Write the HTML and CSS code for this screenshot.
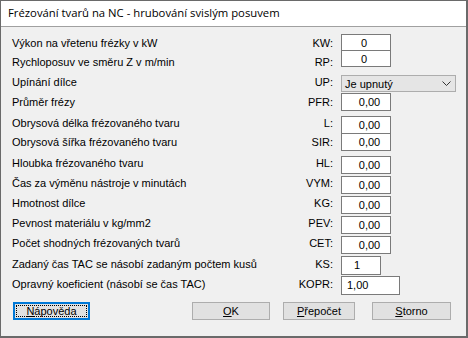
FILE: index.html
```html
<!DOCTYPE html>
<html lang="cs">
<head>
    <meta charset="UTF-8">
    <title>Frézování tvarů na NC</title>
    <link rel="stylesheet" href="styles.css">
</head>
<body>
    <div class="window">
        <div class="titlebar">Frézování tvarů na NC - hrubování svislým posuvem</div>
        <div class="content">
            <div class="form">
                <div class="row first">
                    <span class="label">Výkon na vřetenu frézky v kW</span>
                    <span class="code">KW:</span>
                    <span class="field int f-kw">0</span>
                </div>
                <div class="row">
                    <span class="label">Rychloposuv ve směru Z v m/min</span>
                    <span class="code">RP:</span>
                    <span class="field int f-rp">0</span>
                </div>
                <div class="row">
                    <span class="label">Upínání dílce</span>
                    <span class="code">UP:</span>
                    <span class="combo">Je upnutý
                        <svg class="chevron" width="9" height="5" viewBox="0 0 9 5"><path d="M0.5 0.5 L4.5 4.5 L8.5 0.5" fill="none" stroke="#333" stroke-width="1"/></svg>
                    </span>
                </div>
                <div class="row">
                    <span class="label">Průměr frézy</span>
                    <span class="code">PFR:</span>
                    <span class="field dec">0,00</span>
                </div>
                <div class="row">
                    <span class="label">Obrysová délka frézovaného tvaru</span>
                    <span class="code">L:</span>
                    <span class="field dec low">0,00</span>
                </div>
                <div class="row">
                    <span class="label">Obrysová šířka frézovaného tvaru</span>
                    <span class="code">SIR:</span>
                    <span class="field dec">0,00</span>
                </div>
                <div class="row">
                    <span class="label">Hloubka frézovaného tvaru</span>
                    <span class="code">HL:</span>
                    <span class="field dec low">0,00</span>
                </div>
                <div class="row">
                    <span class="label">Čas za výměnu nástroje v minutách</span>
                    <span class="code">VYM:</span>
                    <span class="field dec low">0,00</span>
                </div>
                <div class="row">
                    <span class="label">Hmotnost dílce</span>
                    <span class="code">KG:</span>
                    <span class="field dec low">0,00</span>
                </div>
                <div class="row">
                    <span class="label">Pevnost materiálu v kg/mm2</span>
                    <span class="code">PEV:</span>
                    <span class="field dec low">0,00</span>
                </div>
                <div class="row">
                    <span class="label">Počet shodných frézovaných tvarů</span>
                    <span class="code">CET:</span>
                    <span class="field dec low">0,00</span>
                </div>
                <div class="row">
                    <span class="label">Zadaný čas TAC se násobí zadaným počtem kusů</span>
                    <span class="code">KS:</span>
                    <span class="field f-ks low">1</span>
                </div>
                <div class="row">
                    <span class="label">Opravný koeficient (násobí se čas TAC)</span>
                    <span class="code">KOPR:</span>
                    <span class="field f-kopr low">1,00</span>
                </div>
            </div>
            <div class="buttons">
                <button class="btn default"><span class="focus"><u>N</u>ápověda</span></button>
                <button class="btn ok"><u>O</u>K</button>
                <button class="btn calc"><u>P</u>řepočet</button>
                <button class="btn cancel"><u>S</u>torno</button>
            </div>
        </div>
    </div>
</body>
</html>
```

FILE: styles.css
```css
body {
    margin: 0;
    background: #f0f0f0;
    font-family: "Liberation Sans", Arial, sans-serif;
    font-size: 11px;
    color: #000;
}
.window {
    width: 468px;
    height: 338px;
    box-sizing: border-box;
    border: 1px solid #6a6a6a;
    border-right-width: 2px;
    border-bottom-width: 2px;
    display: flex;
    flex-direction: column;
}
.titlebar {
    height: 25px;
    background: #fff;
    border-bottom: 1px solid #a0a0a0;
    padding-left: 7px;
    font-family: "Open Sans", "Noto Sans", sans-serif;
    font-size: 11.3px;
    line-height: 24px;
    white-space: nowrap;
}
.content {
    flex: 1;
    background: #f0f0f0;
    padding: 6px 0 0 11px;
}
.row {
    display: grid;
    grid-template-columns: 255px 60px 120px;
    column-gap: 7px;
    align-items: center;
    height: 20px;
}
.row.first {
    height: 19px;
}
.label {
    white-space: nowrap;
}
.code {
    text-align: right;
    padding-right: 1px;
}
.field {
    box-sizing: border-box;
    width: 50px;
    height: 18px;
    background: #fff;
    border: 1px solid #7a7a7a;
    line-height: 16px;
    text-align: center;
}
.field.low {
    margin-top: 4px;
}
.field.int {
    height: 17px;
    padding-right: 4px;
}
.field.f-rp {
    margin-top: -7px;
}
.field.dec {
    padding-left: 7px;
}
.field.f-ks {
    width: 40px;
    height: 19px;
    text-align: left;
    padding-left: 12px;
    line-height: 17px;
}
.field.f-kopr {
    width: 59px;
    height: 19px;
    text-align: left;
    padding-left: 5px;
    line-height: 17px;
}
.combo {
    box-sizing: border-box;
    width: 115px;
    height: 17px;
    margin-top: 3px;
    background: #e5e5e5;
    border: 1px solid #adadad;
    padding-left: 3px;
    display: flex;
    align-items: center;
    justify-content: space-between;
}
.chevron {
    margin-right: 4px;
}
.buttons {
    display: flex;
    margin-top: 10px;
    padding-left: 1px;
    padding-right: 15px;
}
.btn {
    height: 18px;
    box-sizing: border-box;
    background: #e1e1e1;
    border: 1px solid #adadad;
    font-family: "Liberation Sans", Arial, sans-serif;
    font-size: 11px;
    color: #000;
    padding: 0;
    margin: 0;
}
.btn.default {
    width: 77px;
    border: 2px solid #0078d7;
    padding: 1px;
}
.btn .focus {
    display: block;
    height: 100%;
    box-sizing: border-box;
    border: 1px dotted #000;
    line-height: 10px;
}
.btn.ok {
    width: 78px;
    margin-left: auto;
}
.btn.calc {
    width: 72px;
    margin-left: 13px;
}
.btn.cancel {
    width: 79px;
    margin-left: 17px;
}
```
